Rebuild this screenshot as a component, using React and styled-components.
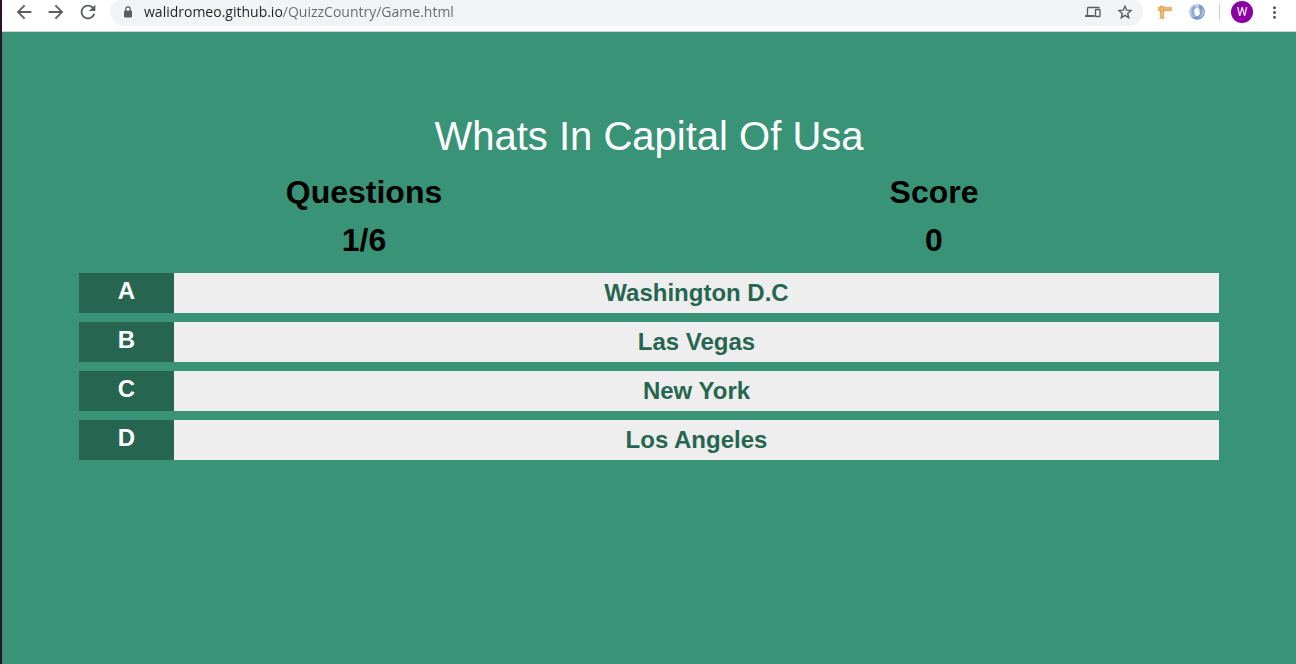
import React from "react";
import styled, { createGlobalStyle } from "styled-components";
import { MdArrowBack, MdArrowForward, MdRefresh, MdMoreVert } from "react-icons/md";

const GlobalStyle = createGlobalStyle`
  *, *::before, *::after { box-sizing: border-box; }
  html, body, #root { height: 100%; }
  body {
    margin: 0;
    background: #399377;
    font-family: "Liberation Sans", Arial, sans-serif;
  }
`;

const Window = styled.div`
  display: flex;
  flex-direction: column;
  min-height: 100%;
  border-left: 2px solid #2c1227;
`;

const Toolbar = styled.header`
  display: flex;
  align-items: flex-start;
  height: 32px;
  padding: 0 6px;
  background: #fff;
  border-bottom: 1px solid #d0d5d3;
`;

const ToolButton = styled.button`
  display: flex;
  flex: none;
  align-items: center;
  justify-content: center;
  width: 32px;
  height: 24px;
  padding: 0;
  border: 0;
  background: none;
  color: #5a5d62;
  cursor: pointer;
`;

const AddressBar = styled.div`
  display: flex;
  flex: 1;
  align-items: flex-start;
  min-width: 0;
  height: 26px;
  margin: 0 6px;
  padding: 0 2px 0 12px;
  border-radius: 10px 10px 14px 14px;
  background: #f1f3f4;
`;

const LockMark = styled.span`
  display: flex;
  flex: none;
  align-items: center;
  width: 22px;
  height: 24px;
  color: #5a5d62;
`;

const AddressInput = styled.input`
  flex: 1;
  min-width: 0;
  height: 24px;
  padding: 0;
  border: 0;
  outline: 0;
  font: 14px/24px "Open Sans", sans-serif;
  color: #5f6368;
  background: linear-gradient(to right, #202124 ${(p) => p.$hostWidth}px, #66696d ${(p) => p.$hostWidth}px);
  background-clip: text;
  -webkit-background-clip: text;
  -webkit-text-fill-color: transparent;
`;

const Divider = styled.span`
  flex: none;
  width: 1px;
  height: 16px;
  margin: 4px 6px 0;
  background: #c9ccd0;
`;

const Avatar = styled.span`
  display: flex;
  align-items: center;
  justify-content: center;
  width: 22px;
  height: 22px;
  border-radius: 50%;
  background: #8a00a3;
  color: #fff;
  font: 12px/22px Roboto, sans-serif;
`;

const Quiz = styled.main`
  flex: 1;
  width: 100%;
  max-width: 1140px;
  margin: 0 auto;
  padding: 80px 0 24px;
`;

const Question = styled.h1`
  margin: 0 0 8px;
  color: #fff;
  font-size: 40px;
  font-weight: 400;
  line-height: 48px;
  text-align: center;
`;

const Stats = styled.dl`
  display: grid;
  grid-template-columns: 1fr 1fr;
  margin: 0 0 9px;
  color: #000;
  font-size: 32px;
  font-weight: 700;
  line-height: 48px;
  text-align: center;
`;

const Stat = styled.div``;
const StatName = styled.dt``;
const StatValue = styled.dd`
  margin: 0;
`;

const Answers = styled.div`
  display: grid;
  gap: 9px;
`;

const Answer = styled.button`
  display: grid;
  grid-template-columns: 1fr 11fr;
  width: 100%;
  height: 40px;
  padding: 0;
  border: 0;
  background: #eee;
  color: #266650;
  font: 700 24px/40px "Liberation Sans", Arial, sans-serif;
  text-align: center;
  cursor: pointer;
`;

const Letter = styled.span`
  height: 40px;
  background: #266650;
  color: #fff;
  line-height: 36px;
`;

const AnswerText = styled.span``;

const LockIcon = () => (
  <svg width="12" height="12" viewBox="0 0 12 12" aria-hidden="true">
    <path d="M3.700 5V3.200a2.300 2.300 0 0 1 4.600 0V5" fill="none" stroke="currentColor" strokeWidth="1.200" />
    <rect x="2" y="4.500" width="8" height="7" rx="1" fill="currentColor" />
  </svg>
);

const DevicesIcon = () => (
  <svg width="16" height="12" viewBox="0 0 16 12" fill="none" stroke="currentColor" aria-hidden="true">
    <path d="M2.500 9.500V2.200q0-.7.700-.7H14.500" strokeWidth="1.300" />
    <path d="M0 10H9.500" strokeWidth="2" />
    <rect x="10.500" y="3.500" width="4.500" height="7" rx=".6" strokeWidth="1.300" />
  </svg>
);

const StarIcon = () => (
  <svg width="16" height="16" viewBox="0 0 16 16" fill="none" stroke="currentColor" aria-hidden="true">
    <path d="M8 2.200l1.700 4 4.300.4-3.300 2.800 1 4.300L8 11.400l-3.700 2.300 1-4.300L2 6.600l4.300-.4z" strokeWidth="1.400" />
  </svg>
);

const RulerIcon = () => (
  <svg width="16" height="16" viewBox="0 0 16 16" aria-hidden="true">
    <ellipse cx="5" cy="14.500" rx="4" ry="1" fill="#e2e2e2" />
    <path d="M3.300 3h3.400v11H3.300z" fill="#efb96c" stroke="#d4974a" strokeWidth=".6" />
    <path d="M1.300 3.300h13.200v3.400H1.300z" fill="#f1bd74" stroke="#d4974a" strokeWidth=".6" />
    <path d="M3.300 2h3.400v5.500H3.300z" fill="#f3bd70" stroke="#d4974a" strokeWidth=".6" />
    <path d="M8.500 5v1.500M10.500 5v1.500M12.500 5v1.500" stroke="#c98d45" strokeWidth=".5" />
  </svg>
);

const SwirlIcon = () => (
  <svg width="16" height="16" viewBox="0 0 16 16" aria-hidden="true">
    <circle cx="8" cy="8" r="7.800" fill="#a9bbdb" />
    <path d="M8 .2C3.500.2.2 3.700.2 8c0 1.800.6 3.400 1.600 4.700C2.200 8 3.500 4.500 9.500 3.300 12 3 13 4 13.500 5 13.200 2.300 11 .2 8 .2z" fill="#c5d2e8" />
    <path d="M5.200 1.500C2.500 3 1.600 6 2.600 9c.6 1.800 1.800 3 3.200 3.500C4.200 9 4 6 7.200 4z" fill="#8fa8cf" />
    <path d="M10 3.200c2.500 2.800 2.300 6.500-.8 8.600-2 1.400-4.500 1.500-6.700.9 2.500 3.300 7 4 10.200 1.300 2.500-2.100 3.600-5.500 2.700-8.600C14.500 2.700 12.200 1 9.500.5z" fill="#6f8fc0" opacity=".8" />
    <path d="M12.700 4c1.300 3.500.2 7.500-3.600 9.500 4.500-.3 6.500-4 5.500-7.300z" fill="#b8c8e2" />
    <ellipse cx="8" cy="8" rx="2.600" ry="4" fill="#fff" transform="rotate(-10 8 8)" />
  </svg>
);

const answers = [
  ["A", "Washington D.C"],
  ["B", "Las Vegas"],
  ["C", "New York"],
  ["D", "Los Angeles"],
];

export default function App() {
  return (
    <>
      <GlobalStyle />
      <Window>
        <Toolbar>
          <ToolButton aria-label="Back"><MdArrowBack size={22} /></ToolButton>
          <ToolButton aria-label="Forward"><MdArrowForward size={22} /></ToolButton>
          <ToolButton aria-label="Reload"><MdRefresh size={22} /></ToolButton>
          <AddressBar>
            <LockMark><LockIcon /></LockMark>
            <AddressInput
              aria-label="Address"
              $hostWidth={139}
              defaultValue="walidromeo.github.io/QuizzCountry/Game.html"
            />
            <ToolButton aria-label="Send to your devices"><DevicesIcon /></ToolButton>
            <ToolButton aria-label="Bookmark this page"><StarIcon /></ToolButton>
          </AddressBar>
          <ToolButton aria-label="Ruler extension"><RulerIcon /></ToolButton>
          <ToolButton aria-label="Swirl extension"><SwirlIcon /></ToolButton>
          <Divider />
          <ToolButton aria-label="Profile"><Avatar>W</Avatar></ToolButton>
          <ToolButton aria-label="Menu"><MdMoreVert size={19} /></ToolButton>
        </Toolbar>
        <Quiz>
          <Question>Whats In Capital Of Usa</Question>
          <Stats>
            <Stat>
              <StatName>Questions</StatName>
              <StatValue>1/6</StatValue>
            </Stat>
            <Stat>
              <StatName>Score</StatName>
              <StatValue>0</StatValue>
            </Stat>
          </Stats>
          <Answers>
            {answers.map(([letter, text]) => (
              <Answer key={letter}>
                <Letter>{letter}</Letter>
                <AnswerText>{text}</AnswerText>
              </Answer>
            ))}
          </Answers>
        </Quiz>
      </Window>
    </>
  );
}
